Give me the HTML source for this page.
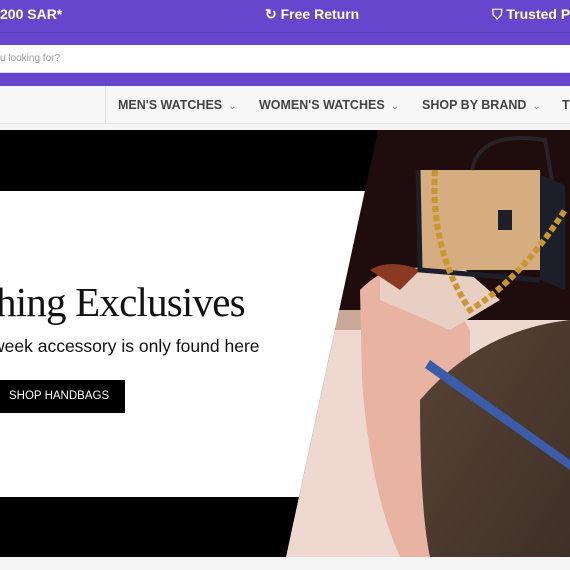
<!DOCTYPE html>
<html><head><meta charset="utf-8"><style>
*{margin:0;padding:0;box-sizing:border-box}
body{width:570px;height:570px;overflow:hidden;background:#f5f5f5;font-family:"Liberation Sans",sans-serif;position:relative}
.top{position:absolute;left:0;top:0;width:570px;height:86px;background:#6646cc;overflow:hidden}
.top .line{position:absolute;left:0;top:32px;width:570px;height:1px;background:#5a3cb8}
.tb{position:absolute;top:6px;color:#fff;font-weight:bold;font-size:14px;white-space:nowrap}
.search{position:absolute;left:0;top:45px;width:570px;height:28px;background:#fff;border-bottom:1px solid #ddd}
.search span{position:absolute;left:0;top:8px;font-size:10px;color:#999}
.nav{position:absolute;left:0;top:86px;width:570px;height:38px;background:#f7f7f7;border-bottom:1px solid #e4e4e4;overflow:hidden}
.nav .div{position:absolute;left:105px;top:0;width:1px;height:38px;background:#e0e0e0}
.ni{position:absolute;top:12px;font-size:12.5px;font-weight:bold;color:#444;white-space:nowrap}
.ni i{font-style:normal;color:#888;font-size:10px;margin-left:6px;font-weight:normal}
.hero{position:absolute;left:0;top:130px;width:570px;height:427px;background:#000;overflow:hidden}
.white{position:absolute;left:0;top:61px;width:400px;height:306px;background:#fff}
h1{position:absolute;left:-84px;top:148px;font-family:"Liberation Serif",serif;font-weight:normal;font-size:41px;color:#111;white-space:nowrap;letter-spacing:-0.8px}
.sub{position:absolute;left:-8px;top:206px;font-size:17.5px;color:#111;white-space:nowrap}
.btn{position:absolute;left:0;top:250px;width:125px;height:33px;background:#000;color:#fff;font-size:11.5px;line-height:33px;padding-left:9px}
svg{position:absolute;left:0;top:0}
</style></head><body>
<div class="top"><div class="line"></div>
<div class="tb" style="left:0">200 SAR*</div>
<div class="tb" style="left:265px">↻ Free Return</div>
<div class="tb" style="left:492px">⛉ Trusted P</div>
</div>
<div class="search"><span>u looking for?</span></div>
<div class="nav"><div class="div"></div>
<div class="ni" style="left:118px">MEN'S WATCHES<i>⌄</i></div>
<div class="ni" style="left:259px">WOMEN'S WATCHES<i>⌄</i></div>
<div class="ni" style="left:422px">SHOP BY BRAND<i>⌄</i></div>
<div class="ni" style="left:562px">T</div>
</div>
<div class="hero">
<div class="white"></div>
<svg width="570" height="427" viewBox="0 0 570 427">
<defs><clipPath id="c"><polygon points="378,0 570,0 570,427 286,427"/></clipPath>
<linearGradient id="sk" x1="0" y1="0" x2="1" y2="1"><stop offset="0" stop-color="#5a4434"/><stop offset="1" stop-color="#3e3028"/></linearGradient></defs>
<g clip-path="url(#c)">
<rect x="250" y="0" width="320" height="427" fill="#1e0d0c"/>
<rect x="250" y="190" width="320" height="237" fill="#eed8d0"/>
<rect x="250" y="180" width="120" height="20" fill="#c9a898"/>
<path d="M360,160 Q400,120 440,150 L470,200 L470,427 L400,427 Q370,360 362,250 Z" fill="#e9b3a4"/>
<path d="M380,140 L460,135 L500,170 L450,200 L380,170 Z" fill="#e8cfc4"/>
<path d="M370,140 Q390,128 420,140 L400,160 Z" fill="#8a3a22"/>
<path d="M420,270 Q480,200 570,190 L570,427 L430,427 Q420,380 420,270 Z" fill="url(#sk)"/>
<path d="M430,230 L570,330 L570,340 L425,238 Z" fill="#3b5ca8"/>
<path d="M418,40 L540,40 L545,140 L420,140 Z" fill="#d6ad80"/>
<path d="M418,40 L420,140 L540,150" stroke="#1c1e2a" stroke-width="5" fill="none"/>
<path d="M540,45 L565,55 L565,160 L540,150 Z" fill="#1c1e2a"/>
<path d="M472,40 Q480,0 545,10 L552,50" stroke="#2a2228" stroke-width="4" fill="none"/>
<path d="M435,40 Q430,120 470,180 Q520,150 565,80" stroke="#c9972d" stroke-width="6" fill="none" stroke-dasharray="6 3"/>
<rect x="498" y="80" width="14" height="20" fill="#1c1e2a"/>
</g>
</svg>
<h1>Watching Exclusives</h1>
<div class="sub">week accessory is only found here</div>
<div class="btn">SHOP HANDBAGS</div>
</div>
</body></html>
